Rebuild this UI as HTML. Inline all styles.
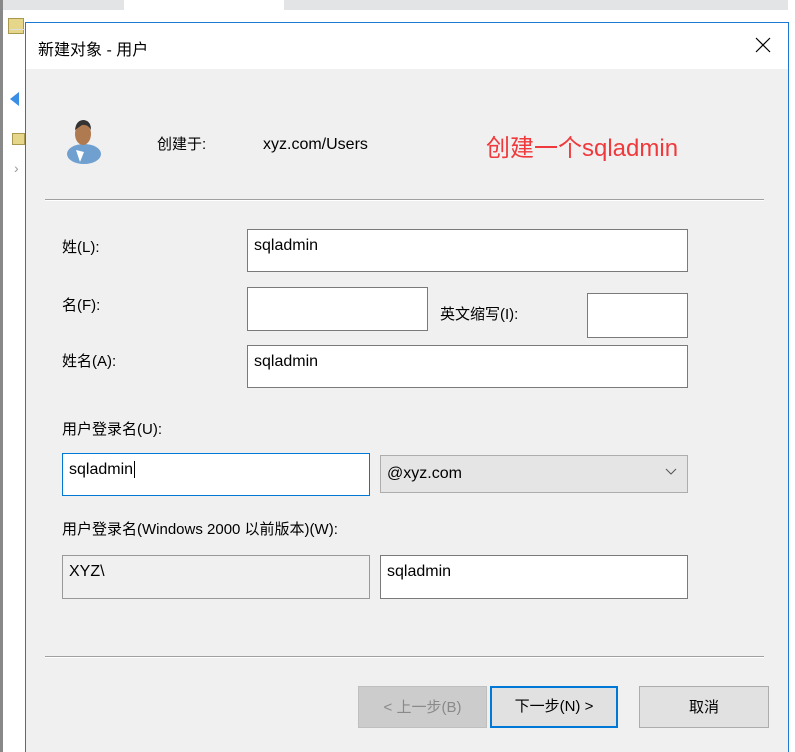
<!DOCTYPE html>
<html><head><meta charset="utf-8"><style>
*{margin:0;padding:0;box-sizing:border-box}
body{width:795px;height:752px;overflow:hidden;background:#fff;position:relative;font-family:"Liberation Sans","Noto Sans CJK SC",sans-serif;font-size:16px;color:#000}
.a{position:absolute}
.inp{position:absolute;background:#fff;border:1px solid #7a7a7a;padding:7px 6px;font-size:16px;line-height:18px}
.lbl{position:absolute;font-size:15px;line-height:18px}
.btn{position:absolute;border:1px solid #adadad;background:#e1e1e1;text-align:center;line-height:42px;font-size:15px}
</style></head><body>
<div class="a" style="left:0;top:0;width:795px;height:10px;background:#e3e4e6"></div>
<div class="a" style="left:0;top:0;width:3px;height:752px;background:#888"></div>
<div class="a" style="left:124px;top:0;width:160px;height:10px;background:#fff"></div>
<div class="a" style="left:8px;top:18px;width:16px;height:16px;background:#e6d68a;border:1px solid #a89850"></div>
<div class="a" style="left:12px;top:133px;width:13px;height:12px;background:#e6d68a;border:1px solid #a89850"></div>
<div class="a" style="left:14px;top:160px;color:#999;font-size:14px">›</div>
<div class="a" style="left:10px;top:29px;width:15px;height:72px;border-top:1px solid #ddd"></div>
<div class="a" style="left:10px;top:92px;width:0;height:0;border:7px solid transparent;border-right:9px solid #3a8ee6;border-left:0"></div>
<div class="a" style="left:788px;top:0;width:7px;height:752px;background:#fff"></div>
<div class="a" style="left:25px;top:22px;width:764px;height:730px;background:#f0f0f0;border:1px solid #1a7ad4;border-bottom:none"></div>
<div class="a" style="left:26px;top:23px;width:762px;height:46px;background:#fff"></div>
<div class="a" style="left:38px;top:36px;font-size:16px">新建对象 - 用户</div>
<svg class="a" style="left:755px;top:37px" width="16" height="16"><path d="M1 1L15 15M15 1L1 15" stroke="#000" stroke-width="1.2"/></svg>
<svg class="a" style="left:66px;top:112px" width="40" height="52">
<ellipse cx="18" cy="42" rx="17" ry="10" fill="#6fa0d0"/>
<path d="M10 38 L14 50 L18 40 Z" fill="#fff"/>
<ellipse cx="17" cy="22" rx="8" ry="11" fill="#b07a50"/>
<path d="M9 18 Q10 8 18 8 Q25 9 25 18 Q22 12 16 13 Z" fill="#333"/>
</svg>
<div class="lbl" style="left:157px;top:136px">创建于:</div>
<div class="lbl" style="left:263px;top:136px;font-size:16px">xyz.com/Users</div>
<div class="a" style="left:486px;top:135px;color:#f0393c;font-size:24px;line-height:28px">创建一个sqladmin</div>
<div class="a" style="left:45px;top:199px;width:719px;height:2px;background:#a0a0a0;border-bottom:1px solid #fff"></div>

<div class="lbl" style="left:62px;top:239px">姓(L):</div>
<div class="inp" style="left:247px;top:229px;width:441px;height:43px">sqladmin</div>
<div class="lbl" style="left:62px;top:297px">名(F):</div>
<div class="inp" style="left:247px;top:287px;width:181px;height:44px"></div>
<div class="lbl" style="left:440px;top:306px">英文缩写(I):</div>
<div class="inp" style="left:587px;top:293px;width:101px;height:45px"></div>
<div class="lbl" style="left:62px;top:353px">姓名(A):</div>
<div class="inp" style="left:247px;top:345px;width:441px;height:43px">sqladmin</div>

<div class="lbl" style="left:62px;top:421px">用户登录名(U):</div>
<div class="inp" style="left:62px;top:453px;width:308px;height:43px;border-color:#0078d7">sqladmin<span style="border-left:1px solid #000;margin-left:1px"></span></div>
<div class="inp" style="left:380px;top:455px;width:308px;height:38px;background:#e5e5e5;border-color:#adadad;padding-top:9px">@xyz.com</div>
<svg class="a" style="left:665px;top:468px" width="12" height="8"><path d="M1 1L6 6L11 1" stroke="#555" fill="none"/></svg>

<div class="lbl" style="left:62px;top:521px">用户登录名(Windows 2000 以前版本)(W):</div>
<div class="inp" style="left:62px;top:555px;width:308px;height:44px;background:#f0f0f0;border-color:#999">XYZ\</div>
<div class="inp" style="left:380px;top:555px;width:308px;height:44px">sqladmin</div>

<div class="a" style="left:45px;top:656px;width:719px;height:2px;background:#a0a0a0;border-bottom:1px solid #fff"></div>
<div class="btn" style="left:358px;top:686px;width:129px;height:42px;background:#cccccc;border-color:#bfbfbf;color:#8a8a8a">&lt; 上一步(B)</div>
<div class="btn" style="left:490px;top:686px;width:128px;height:42px;border:2px solid #0078d7;line-height:38px">下一步(N) &gt;</div>
<div class="btn" style="left:639px;top:686px;width:130px;height:42px">取消</div>
</body></html>
